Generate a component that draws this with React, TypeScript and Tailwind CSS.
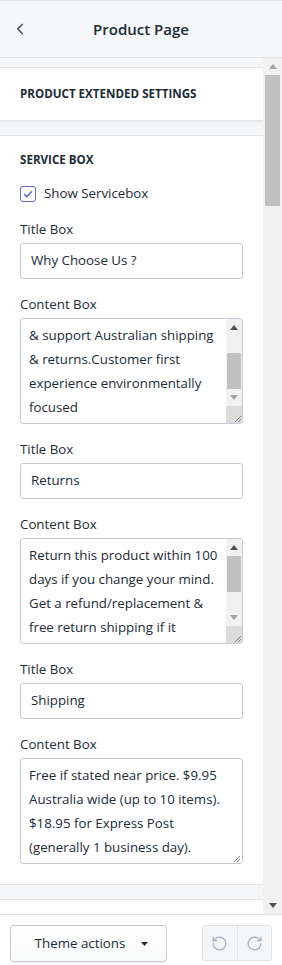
import { ChevronLeft, RotateCcw, RotateCw } from "lucide-react";

type Thumb = { offset: number; size: number } | null;

function Arrow({ up, color }: { up?: boolean; color: string }) {
  return (
    <svg width="8" height="5" viewBox="0 0 8 5">
      {up ? <path d="M0 5 L4 0 L8 5 Z" fill={color} /> : <path d="M0 0 L4 5 L8 0 Z" fill={color} />}
    </svg>
  );
}

function Grip() {
  return (
    <svg width="9" height="9" viewBox="0 0 9 9">
      <path d="M8 2 L2 8 M8 5 L5 8" stroke="#8a8a8a" strokeWidth="1" />
    </svg>
  );
}

function Label({ children }: { children: React.ReactNode }) {
  return <div className="h-5 leading-5 mb-1 text-[13.3px] text-[#212b36]">{children}</div>;
}

function TitleBox({ value }: { value: string }) {
  return (
    <div>
      <Label>Title Box</Label>
      <div className="h-9 border border-[#c4cdd5] rounded-[3px] bg-white px-[10px] flex items-center text-[13.3px] text-[#212b36]">
        {value}
      </div>
    </div>
  );
}

function ContentBox({ lines, thumb }: { lines: string[]; thumb: Thumb }) {
  return (
    <div>
      <Label>Content Box</Label>
      <div className="h-[106px] border border-[#c4cdd5] rounded-[3px] bg-white flex overflow-hidden">
        <div className="flex-1 pl-[8px] pt-[4px] text-[13.3px] leading-6 text-[#212b36] overflow-hidden">
          {lines.map((l) => (
            <div key={l} className="whitespace-nowrap">
              {l}
            </div>
          ))}
        </div>
        {thumb ? (
          <div className="w-[16px] flex flex-col bg-[#f1f1f1]">
            <div className="h-[17px] flex items-center justify-center">
              <Arrow up color="#505050" />
            </div>
            <div className="flex-1 flex flex-col px-[1px]">
              <div style={{ height: thumb.offset }} />
              <div className="bg-[#c1c1c1]" style={{ height: thumb.size }} />
            </div>
            <div className="h-[17px] flex items-center justify-center">
              <Arrow color="#a3a3a3" />
            </div>
            <div className="h-[17px] bg-[#dcdcdc] flex items-end justify-end">
              <Grip />
            </div>
          </div>
        ) : (
          <div className="w-[10px] flex flex-col justify-end">
            <Grip />
          </div>
        )}
      </div>
    </div>
  );
}

export default function App() {
  return (
    <div className="w-[282px] h-[965px] flex flex-col bg-white font-['Open_Sans',sans-serif] text-[#212b36] overflow-hidden">
      <header className="h-[58px] shrink-0 bg-[#f6f7f9] border-t border-b border-[#e3e5e8] flex items-center">
        <ChevronLeft className="ml-[11px]" size={18} strokeWidth={2.2} color="#454f5b" />
        <div className="flex-1 text-center pr-[29px] text-[15px] font-semibold">Product Page</div>
      </header>

      <div className="flex-1 flex min-h-0">
        <div className="w-[263px] bg-[#f4f6f8] overflow-hidden pt-[9px] flex flex-col gap-[14px]">
          <section className="h-[54px] shrink-0 bg-white border-y border-[#e3e5e8] shadow-[0_1px_1px_rgba(0,0,0,0.04)] flex items-center px-5">
            <h2 className="text-[11.6px] font-bold uppercase">Product extended settings</h2>
          </section>

          <section className="shrink-0 bg-white border-y border-[#e3e5e8] pt-[16px] pb-[20px] px-5 flex flex-col gap-[15px]">
            <h2 className="text-[11.6px] leading-4 font-bold uppercase">Service box</h2>
            <label className="h-5 mt-px flex items-center gap-[8px] text-[13.3px]">
              <span className="w-4 h-4 border border-[#5c6ac4] rounded-[3px] flex items-center justify-center bg-white">
                <svg width="10" height="8" viewBox="0 0 10 8">
                  <path d="M1 4 L3.8 6.6 L9 1.2" fill="none" stroke="#5c6ac4" strokeWidth="1.5" />
                </svg>
              </span>
              Show Servicebox
            </label>
            <TitleBox value="Why Choose Us ?" />
            <ContentBox
              lines={["& support Australian shipping", "& returns.Customer first", "experience environmentally", "focused"]}
              thumb={{ offset: 17, size: 36 }}
            />
            <TitleBox value="Returns" />
            <ContentBox
              lines={["Return this product within 100", "days if you change your mind.", "Get a refund/replacement &", "free return shipping if it"]}
              thumb={{ offset: 0, size: 36 }}
            />
            <TitleBox value="Shipping" />
            <ContentBox
              lines={["Free if stated near price. $9.95", "Australia wide (up to 10 items).", "$18.95 for Express Post", "(generally 1 business day)."]}
              thumb={null}
            />
          </section>

          <section className="h-[40px] shrink-0 bg-white border-t border-[#e3e5e8]" />
        </div>

        <div className="w-[19px] bg-[#f1f1f1] flex flex-col">
          <div className="h-[17px] flex items-center justify-center">
            <Arrow up color="#a3a3a3" />
          </div>
          <div className="flex-1 flex flex-col px-[2px]">
            <div className="h-[131px] bg-[#c1c1c1]" />
          </div>
          <div className="h-[17px] flex items-center justify-center">
            <Arrow color="#505050" />
          </div>
        </div>
      </div>

      <footer className="h-[51px] shrink-0 border-t border-[#dfe3e8] bg-white flex items-start pt-[10px] px-[10px]">
        <button className="w-[157px] h-[37px] border border-[#c4cdd5] rounded-[3px] bg-gradient-to-b from-white to-[#f9fafb] shadow-[0_1px_0_rgba(22,29,37,0.05)] flex items-center justify-center gap-[16px] pl-[6px] text-[13.3px] text-[#212b36]">
          Theme actions
          <svg width="7" height="4" viewBox="0 0 7 4">
            <path d="M0 0 L3.5 4 L7 0 Z" fill="#212b36" />
          </svg>
        </button>
        <div className="ml-auto w-[70px] h-[36px] border border-[#dfe3e8] rounded-[3px] bg-[#f4f6f8] flex">
          <div className="flex-1 flex items-center justify-center border-r border-[#dfe3e8]">
            <RotateCcw size={17} strokeWidth={1.7} color="#a4b0bd" />
          </div>
          <div className="flex-1 flex items-center justify-center">
            <RotateCw size={17} strokeWidth={1.7} color="#a4b0bd" />
          </div>
        </div>
      </footer>
    </div>
  );
}
